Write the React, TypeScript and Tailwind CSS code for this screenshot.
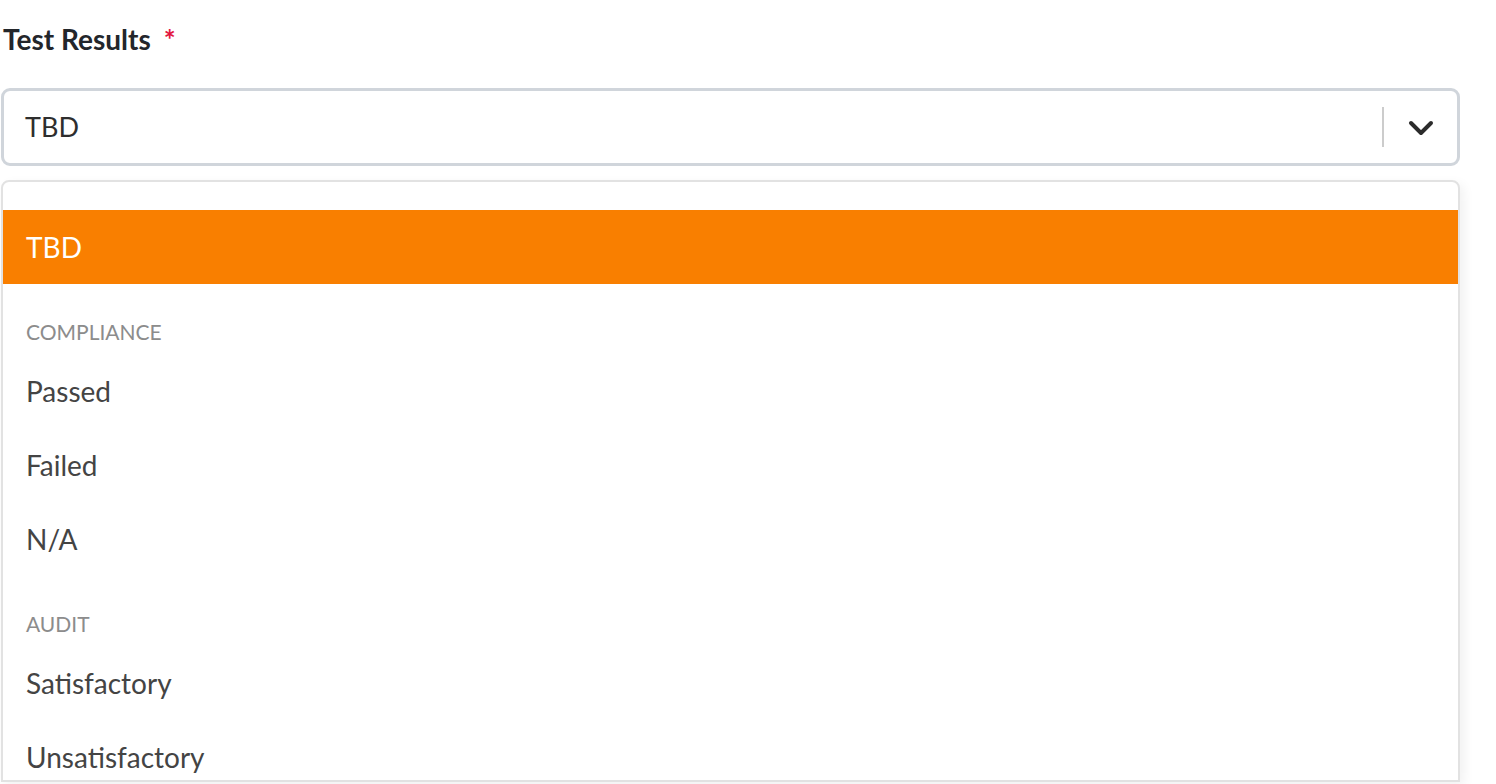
import React from "react";

type Option = { label: string; active?: boolean };
type Group = { title?: string; options: Option[] };

const groups: Group[] = [
  { options: [{ label: "TBD", active: true }] },
  { title: "COMPLIANCE", options: [{ label: "Passed" }, { label: "Failed" }, { label: "N/A" }] },
  { title: "AUDIT", options: [{ label: "Satisfactory" }, { label: "Unsatisfactory" }] },
];

function ChevronDown() {
  return (
    <svg width="26" height="18" viewBox="0 0 26 18" fill="none">
      <polyline
        points="3,4 13,14 23,4"
        stroke="#2b2b2b"
        strokeWidth="4"
        strokeLinecap="round"
        strokeLinejoin="round"
      />
    </svg>
  );
}

export default function App() {
  return (
    <div className="min-h-screen w-full bg-white font-['Lato','Noto_Sans',sans-serif]">
      <div className="pt-[22px]">
        <label className="flex items-center gap-[13px] pl-[3px] text-[28px] font-bold leading-[34px] text-[#23262b]">
          Test Results
          <span className="text-[28px] font-bold text-[#e3163f]">*</span>
        </label>

        <div className="mt-[32px] ml-[1px] flex h-[78px] w-[1459px] items-center rounded-[9px] border-[3px] border-[#d0d5db] bg-white">
          <div className="flex-1 pl-[21px] text-[27px] text-[#2e2e2e]">TBD</div>
          <div className="h-[40px] w-[2px] bg-[#cccccc]" />
          <div className="flex w-[73px] items-center justify-center pt-[2px]">
            <ChevronDown />
          </div>
        </div>

        <div className="mt-[14px] ml-[1px] h-[602px] w-[1459px] overflow-hidden rounded-t-[8px] border-2 border-[#e2e2e2] bg-white pt-[28px] shadow-[4px_4px_12px_rgba(0,0,0,0.06)]">
          {groups.map((g, gi) => (
            <div key={gi}>
              {g.title && (
                <div className="pt-[38px] pb-[12px] pl-[23px] text-[21px] leading-[20px] text-[#8c8c8c]">
                  {g.title}
                </div>
              )}
              {g.options.map((o) => (
                <div
                  key={o.label}
                  className={
                    o.active
                      ? "flex h-[74px] items-center bg-[#f97f00] pl-[23px] text-[28px] text-white"
                      : "flex h-[74px] items-center pl-[23px] text-[28px] text-[#444444]"
                  }
                >
                  {o.label}
                </div>
              ))}
            </div>
          ))}
        </div>
      </div>
    </div>
  );
}
